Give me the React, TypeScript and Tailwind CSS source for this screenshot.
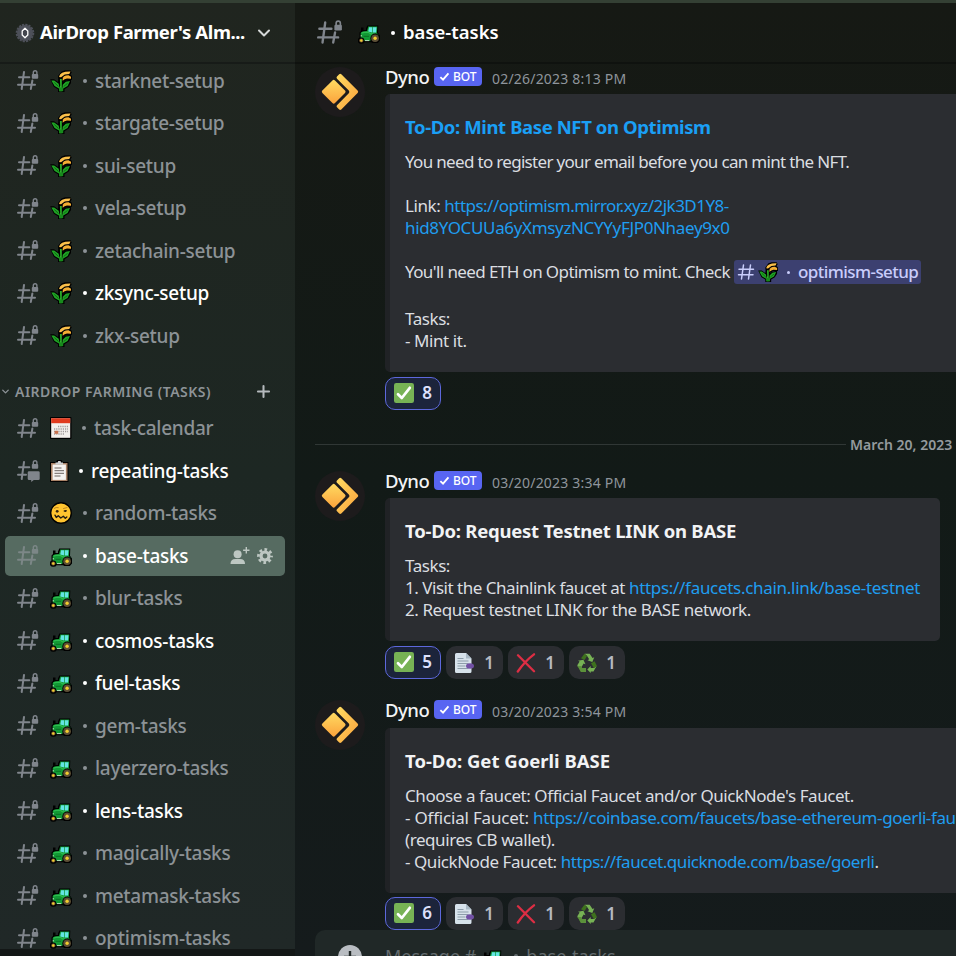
import type { ReactNode } from "react";
import clsx from "clsx";
import { ChevronDown, Plus } from "lucide-react";

type EmojiName = "wheat" | "tractor" | "calendar" | "clipboard" | "woozy";

type Channel = {
  name: string;
  emoji: EmojiName;
  unread?: boolean;
  active?: boolean;
  forum?: boolean;
};

const SETUP: Channel[] = [
  { name: "starknet-setup", emoji: "wheat" },
  { name: "stargate-setup", emoji: "wheat" },
  { name: "sui-setup", emoji: "wheat" },
  { name: "vela-setup", emoji: "wheat" },
  { name: "zetachain-setup", emoji: "wheat" },
  { name: "zksync-setup", emoji: "wheat", unread: true },
  { name: "zkx-setup", emoji: "wheat" },
];

const TASKS: Channel[] = [
  { name: "task-calendar", emoji: "calendar" },
  { name: "repeating-tasks", emoji: "clipboard", unread: true, forum: true },
  { name: "random-tasks", emoji: "woozy" },
  { name: "base-tasks", emoji: "tractor", active: true },
  { name: "blur-tasks", emoji: "tractor" },
  { name: "cosmos-tasks", emoji: "tractor", unread: true },
  { name: "fuel-tasks", emoji: "tractor", unread: true },
  { name: "gem-tasks", emoji: "tractor" },
  { name: "layerzero-tasks", emoji: "tractor" },
  { name: "lens-tasks", emoji: "tractor", unread: true },
  { name: "magically-tasks", emoji: "tractor" },
  { name: "metamask-tasks", emoji: "tractor" },
  { name: "optimism-tasks", emoji: "tractor" },
];

/* ── Icons ── */

function HashLock({ className, forum }: { className?: string; forum?: boolean }) {
  return (
    <svg viewBox="0 0 23 23" className={clsx("shrink-0", className)} fill="none" stroke="currentColor" strokeWidth="2" strokeLinecap="round">
      <path d={forum ? "M7 3 4.7 20M2 8.3h10.3M1 15.7h8" : "M7 3 4.7 20M2 8.3h10.3M1 15.7h17M15.4 11.5 13.8 20"} />
      <rect x="14.8" y="4.9" width="6.4" height="4.8" rx="1" fill="currentColor" stroke="none" />
      <path d="M16.3 5.5V3.6a1.8 1.8 0 0 1 3.6 0v1.9" strokeWidth="1.4" />
      {forum && <path d="M12 12.2h9.4a1.3 1.3 0 0 1 1.3 1.3v6.2a1.3 1.3 0 0 1-1.3 1.3h-4.6l-2.6 2v-2H12a1.3 1.3 0 0 1-1.3-1.3v-6.2a1.3 1.3 0 0 1 1.3-1.3Z" fill="currentColor" stroke="none" />}
    </svg>
  );
}

function Wheat({ className }: { className?: string }) {
  return (
    <svg viewBox="0 0 22 22" className={className} strokeLinejoin="round">
      {/* ears */}
      <path d="M8.5 11.500 8 6 11.500 1.500 15 .3H20.500L21.700 2.500 20.300 4.500 22 6V9.800L17 10 13 12Z" fill="#000" />
      <path d="M9 6.900Q10 1.300 20.500 1.500L19.300 3.900 14.800 4.500 11 7.200Z" fill="#fbc04a" />
      <path d="M12 9.600Q13 5.200 18.500 5.300L21 6.700V8.700L17 8.400Q14.500 8.700 12.400 11Z" fill="#f4ae33" />
      {/* leaves */}
      <path d="M.2 9.300H4L8 12 9.200 8H12.600V12.300L15.500 10.600 21 9.600V13L18.500 16.700 14.500 19.200V22H8V19.200L3.800 16.700Z" fill="#000" />
      <path d="M1.300 10.400H4.200L8.700 13.800 9.800 19 4.600 16ZM20 10.900 15.800 11.700 12.700 14.800 12.400 19 17.600 16Z" fill="#1fa324" />
      <path d="M9.900 9h1.900v12.200H9.300V18.500L10.200 15.500Z" fill="#2cb02a" />
      <path d="M9.200 17.500h4V21.200H9.200Z" fill="#178a1c" />
      <path d="M4.300 12.500 8.500 16.500M17.600 13.300 13.700 16.500" stroke="#07520c" strokeWidth=".7" />
    </svg>
  );
}

function Tractor({ className }: { className?: string }) {
  return (
    <svg viewBox="0 0 22 22" className={className}>
      <path d="M8 6.500 9.300 3.400H20.300L20 10.800 22 13.500V18.500L19.800 21H14.500L13 20.300H6.500L5.500 21.600H1.500L0 20V17L1.500 15.500V10.500L3 9V5.500H5.500V8H8Z" fill="#000" />
      <path d="M2.700 11 4.500 9.400 9 9 10.200 4.400H19.300L18.900 11 21 13.500 14 14.500 12.200 18.900H6.500L2.700 15.800Z" fill="#129a35" />
      <path d="M11.100 5.300H14.100V10.400L10.200 9.500ZM14.800 5.300H18.500L18.100 10.600H14.800Z" fill="#63e5e3" />
      <path d="M3.500 11.200 6 10.300H10.500L12.500 11.800H17" fill="none" stroke="#2dbd50" strokeWidth="1.300" />
      <path d="M5.500 14.300H11" stroke="#08661f" strokeWidth=".8" />
      <path d="M2.700 13.800H4M7 18.600H11.200" stroke="#cfe8d0" strokeWidth=".9" />
      <circle cx="3.300" cy="18.500" r="3" fill="#000" />
      <circle cx="3.300" cy="18.500" r="2.100" fill="#70552f" />
      <circle cx="3.300" cy="18.500" r="1.200" fill="#f2cd2f" />
      <circle cx="17.100" cy="16.200" r="4.700" fill="#000" />
      <circle cx="17.100" cy="16.200" r="3.800" fill="#5c4f35" />
      <circle cx="17.100" cy="16.200" r="1.700" fill="#f2cd2f" />
    </svg>
  );
}

function Calendar({ className }: { className?: string }) {
  return (
    <svg viewBox="0 0 22 22" className={className}>
      <rect width="21.500" height="22" rx="1" fill="#000" />
      <rect x="1.200" y="1.200" width="19" height="19.600" fill="#f3efec" />
      <rect x="1.200" y="1.200" width="19" height="5" fill="#e03a1e" />
      <path d="M8 9.500h10M4 12h14M4 14.500h14M4 17h10" stroke="#a09a9a" strokeWidth="1.300" strokeDasharray="1.200 1" />
      <path d="M4.600 13.800h3.600v3h-3.600z" fill="#c86f4c" />
    </svg>
  );
}

function Clipboard({ className }: { className?: string }) {
  return (
    <svg viewBox="0 0 22 22" className={className}>
      <path d="M0 2H6L7 0H11.500L12.500 2H18.500V22H0Z" fill="#000" />
      <rect x="1" y="3" width="16.500" height="18" fill="#a98267" />
      <rect x="2.600" y="4.500" width="13.300" height="15.400" fill="#f5f2f0" />
      <path d="M5.500 4.600V2.600H7.700L8.200 1H10.500L11 2.600H13V4.600Z" fill="#cfd1d4" />
      <path d="M4.500 8h7M4.500 10.700h9.500M4.500 13.300h9.500M4.500 16h6" stroke="#6b625f" strokeWidth="1" />
    </svg>
  );
}

function Woozy({ className }: { className?: string }) {
  return (
    <svg viewBox="0 0 22 22" className={className} fill="none" strokeLinecap="round" strokeLinejoin="round">
      <circle cx="11" cy="11" r="10.300" fill="#ffc42f" stroke="#000" strokeWidth="1.400" />
      <path d="M5 13.200 6.300 15.400 8.300 13.800 10.800 16 13.300 14.200 15.300 16.300 16.800 15" stroke="#221b12" strokeWidth="1.400" />
      <path d="M4.300 6.300Q6 4.900 8.300 5.600M13.500 6.500 17 5.600" stroke="#b57d20" strokeWidth=".9" />
      <circle cx="7.200" cy="9.300" r="1.400" fill="#35250f" />
      <path d="M13.400 9Q14.300 7.400 17 8.200L16.500 9.400Q15 10.800 13.400 9Z" fill="#35250f" />
    </svg>
  );
}

function Emoji({ name, className }: { name: EmojiName; className?: string }) {
  switch (name) {
    case "wheat":
      return <Wheat className={className} />;
    case "tractor":
      return <Tractor className={className} />;
    case "calendar":
      return <Calendar className={className} />;
    case "clipboard":
      return <Clipboard className={className} />;
    default:
      return <Woozy className={className} />;
  }
}

function DynoAvatar() {
  return (
    <svg viewBox="0 0 50 50" className="h-[50px] w-[50px] shrink-0">
      <defs>
        <linearGradient id="dyno" x1="0" y1="0" x2="1" y2="1">
          <stop offset="0" stopColor="#ffdc62" />
          <stop offset="1" stopColor="#fba13b" />
        </linearGradient>
      </defs>
      <circle cx="25" cy="25" r="25" fill="#1d1b1c" />
      <rect x="9.800" y="15.900" width="17.800" height="17.800" rx="1.800" transform="rotate(45 18.700 24.800)" fill="url(#dyno)" />
      <path d="M22 9.600 24.200 7.300Q25.200 6.400 26.300 7.300L42.600 23.500Q43.800 24.800 42.600 26.100L26.300 42.500Q25.200 43.400 24.200 42.500L22 40.200Q21 39.200 22 38.200L33.800 26.300Q35 24.900 33.800 23.500L22 11.700Q21 10.600 22 9.600Z" fill="url(#dyno)" />
    </svg>
  );
}

function ServerBadge() {
  return (
    <svg viewBox="0 0 20 20" className="h-5 w-5 shrink-0">
      <circle cx="10" cy="10" r="8" fill="#4d5059" />
      <circle cx="10" cy="10" r="8.300" fill="none" stroke="#4d5059" strokeWidth="2" strokeDasharray="2.200 1.060" />
      <path d="M10 5.300 12.800 8v4L10 14.700 7.200 12V8Z" fill="#43464e" stroke="#fff" strokeWidth="1.300" strokeLinejoin="round" />
    </svg>
  );
}

function AddMember() {
  return (
    <svg viewBox="0 0 20 18" className="h-[18px] w-5" fill="#bdc7c2">
      <circle cx="7.600" cy="7.300" r="4" />
      <path d="M.5 17Q.5 12 5.500 12H10Q15 12 15 17Z" />
      <path d="M16.300 0v6.400M13.100 3.200h6.400" stroke="#bdc7c2" strokeWidth="1.400" />
    </svg>
  );
}

function Gear() {
  return (
    <svg viewBox="0 0 16 16" className="h-4 w-4">
      <circle cx="8" cy="8" r="4" fill="none" stroke="#bdc7c2" strokeWidth="3.200" />
      <circle cx="8" cy="8" r="6.500" fill="none" stroke="#bdc7c2" strokeWidth="2.800" strokeDasharray="2.700 2.405" strokeDashoffset="1.350" />
    </svg>
  );
}

/* ── Sidebar ── */

function ChannelRow({ name, emoji, unread, active, forum }: Channel) {
  return (
    <div
      className={clsx(
        "mb-[2.5px] ml-[5px] flex h-10 w-[280px] items-center rounded-[5px] pl-3",
        active && "bg-[#566b61]",
        unread || active ? "text-white" : "text-[#8c9296]",
      )}
    >
      <HashLock forum={forum} className={clsx("h-[23px] w-[23px]", active ? "text-[#7c8787]" : "text-[#80858c]")} />
      <Emoji name={emoji} className="ml-[10px] h-[22px] w-[22px] shrink-0" />
      <span className={clsx("h-1 w-1 shrink-0 rounded-full bg-current", emoji === "clipboard" ? "ml-[7px]" : emoji === "calendar" ? "ml-[10px]" : "ml-[11px]")} />
      <span className="ml-2 text-[19px] leading-10 font-medium tracking-[-0.280px] whitespace-nowrap">{name}</span>
      {active && (
        <span className="mr-3 ml-auto flex items-center gap-[7px]">
          <AddMember />
          <Gear />
        </span>
      )}
    </div>
  );
}

function Sidebar() {
  return (
    <aside className="flex w-[295px] shrink-0 flex-col">
      <div className="flex h-[946px] flex-col overflow-hidden bg-linear-to-b from-[#20251f] via-[#1d2723] to-[#202827]">
        <header className="flex h-[61px] shrink-0 items-center border-b-2 border-[#171b18] pl-[15px]">
          <ServerBadge />
          <h1 className="ml-[5px] w-[208px] text-[18.500px] leading-none font-bold tracking-[-0.400px] whitespace-nowrap text-white">AirDrop Farmer&apos;s Alm...</h1>
          <ChevronDown className="ml-[6px] h-5 w-5 text-[#d5d8d8]" strokeWidth={2.4} />
        </header>
        <div className="-mt-[3.5px] shrink-0">
          {SETUP.map((c) => (
            <ChannelRow key={c.name} {...c} />
          ))}
        </div>
        <div className="mt-[4px] flex h-[46px] shrink-0 items-center pt-[13px] pr-[22px] text-[#8d9397]">
          <ChevronDown className="h-[11px] w-[11px]" strokeWidth={3} />
          <h2 className="ml-1 text-[14px] font-semibold tracking-[0.490px] whitespace-nowrap">AIRDROP FARMING (TASKS)</h2>
          <Plus className="ml-auto h-[19px] w-[19px] text-[#b5babd]" strokeWidth={2.6} />
        </div>
        <div className="shrink-0">
          {TASKS.map((c) => (
            <ChannelRow key={c.name} {...c} />
          ))}
        </div>
      </div>
      <div className="grow bg-[#131716]" />
    </aside>
  );
}

/* ── Messages ── */

function Link({ className, children }: { className?: string; children: ReactNode }) {
  return <span className={clsx("text-[#1f9df0]", className)}>{children}</span>;
}

type ReactionKind = "check" | "page" | "cross" | "recycle";

function ReactionIcon({ kind }: { kind: ReactionKind }) {
  if (kind === "check")
    return (
      <svg viewBox="0 0 20 20" className="h-5 w-5">
        <rect width="20" height="20" rx="2.200" fill="#77b255" />
        <path d="M4 11.300 7.800 15 15.800 4.800" fill="none" stroke="#fff" strokeWidth="2.700" strokeLinecap="round" strokeLinejoin="round" />
      </svg>
    );
  if (kind === "page")
    return (
      <svg viewBox="0 0 20 20" className="h-5 w-5">
        <path d="M2.500 0H12L17.500 5.500V18.500A1.500 1.500 0 0 1 16 20H2.500A1.500 1.500 0 0 1 1 18.500V1.500A1.500 1.500 0 0 1 2.500 0Z" fill="#d7e2eb" />
        <path d="M12 0 17.500 5.500H12Z" fill="#a9b9c6" />
        <path d="M3.500 5.500h6M3.500 8h11M3.500 10.500h11M3.500 13h8M3.500 15.500h11" stroke="#8d9daa" strokeWidth="1.100" />
        <ellipse cx="16" cy="13" rx="4" ry="2.700" fill="#7251a5" />
      </svg>
    );
  if (kind === "cross")
    return (
      <svg viewBox="0 0 20 20" className="h-5 w-5">
        <path d="M2 2.300 18 18.300M18 1.300Q9 8 1.800 18.500" fill="none" stroke="#dd2e44" strokeWidth="2.300" strokeLinecap="round" />
      </svg>
    );
  return (
    <svg viewBox="0 0 20 20" className="h-5 w-5">
      <path d="M7.500.8h5.200L15.500 5 17.300 4.300 15.300 9 10.500 7.200 12.200 6.300 10 2.700Z" fill="#77b255" />
      <path d="M7.500.8 10 2.900 7.600 7 4 5.200Z" fill="#3e721d" />
      <path d="M1 7.700 6.400 6.700 8.500 11.300 6.600 10.500 4.300 14.500 1 14 .3 12.300 2.600 8.500Z" fill="#77b255" />
      <path d="M.5 13h3.800L5.200 15H9V19H3.800Z" fill="#5c913b" />
      <path d="M19.700 12.800 16.500 18.600H13.700V20L10.300 16.500 13.700 13V15H16.500Z" fill="#77b255" />
      <path d="M14 10.200 17.600 8.200 19.800 12.800 17 15.200Z" fill="#3e721d" />
    </svg>
  );
}

function Reactions({ count }: { count: number }) {
  return (
    <div className="flex h-[33px] gap-[5px]">
      <div className="flex w-14 items-center justify-between rounded-[10px] border border-[#5d68dc] bg-[#1c243b] pr-2 pb-px pl-2 text-[17px] font-semibold text-[#dee0fc]">
        <ReactionIcon kind="check" />
        <span>{count}</span>
      </div>
      {count !== 8 &&
        (["page", "cross", "recycle"] as const).map((kind) => (
          <div key={kind} className={clsx("flex items-center justify-between rounded-[10px] bg-[#2b2d31] pr-[9px] pl-2 text-[17px] font-semibold text-[#b5bac1]", kind === "page" ? "w-[57px]" : "w-14")}>
            <ReactionIcon kind={kind} />
            <span>1</span>
          </div>
        ))}
    </div>
  );
}

type MessageProps = {
  time: string;
  title: string;
  titleClass: string;
  embedClass: string;
  count: number;
  children: ReactNode;
};

function Message({ time, title, titleClass, embedClass, count, children }: MessageProps) {
  return (
    <article className="flex pl-5">
      <DynoAvatar />
      <div className="ml-5 flex flex-col">
        <div className="flex h-[28px] items-center pb-[9px] whitespace-nowrap">
          <span className="w-[44px] text-[18.500px] leading-5 font-medium tracking-[-0.500px] text-[#f2f3f5]">Dyno</span>
          <span className="ml-[5px] flex h-[19px] w-12 items-center rounded-[4px] bg-[#5865f2] pl-[5px] text-[12px] leading-none font-medium tracking-[-0.100px] text-white">
            <svg viewBox="0 0 12 12" className="mr-[3px] h-[11px] w-[11px]" fill="none" stroke="currentColor" strokeWidth="2">
              <path d="M1.500 6.700 4.400 9.500 10.300 2.500" />
            </svg>
            BOT
          </span>
          <span className="mt-1 ml-[10px] text-[14px] tracking-[0.200px] text-[#8f959c]">{time}</span>
        </div>
        <div className={clsx("rounded-[5px] border-l-[5px] border-[#202225] bg-[#2b2d31] pt-[22px] pl-[15px] whitespace-nowrap text-[#dbdee1]", embedClass)}>
          <h3 className={clsx("text-[18.500px] leading-[22px] font-bold", titleClass)}>{title}</h3>
          <div className="mt-[13px] text-[17px] leading-[22px] tracking-[-0.430px]">{children}</div>
        </div>
        <div className={count === 6 ? "mt-[4px]" : "mt-[5px]"}>
          <Reactions count={count} />
        </div>
      </div>
    </article>
  );
}

function ChannelMention() {
  return (
    <span className="ml-[4px] inline-flex h-6 w-[187px] shrink-0 items-center rounded-[3px] bg-[#3c4070] pl-[3px] font-medium text-[#c9cdfb]">
      <svg viewBox="0 0 18 18" className="h-[18px] w-[18px]" fill="none" stroke="currentColor" strokeWidth="1.500" strokeLinecap="round">
        <path d="M6.500 2 4.500 16M13.500 2l-2 14M2 6.300h14.500M1.500 11.700H16" />
      </svg>
      <Wheat className="ml-[3px] h-5 w-5" />
      <span className="ml-[9px] h-[3px] w-[3px] rounded-full bg-current" />
      <span className="ml-[8px] tracking-[-0.560px]">optimism-setup</span>
    </span>
  );
}

function Chat() {
  return (
    <main className="flex h-[953px] w-[661px] flex-col overflow-hidden bg-linear-to-b from-[#161914] via-[#121a17] to-[#151b1c]">
      <header className="flex h-[61px] shrink-0 items-center border-b-2 border-[#0f120f] pl-[22px] text-white">
        <HashLock className="h-[27px] w-[27px] text-[#80858c]" />
        <Tractor className="ml-[14px] h-[22px] w-[22px]" />
        <span className="ml-[11px] h-1 w-1 rounded-full bg-current" />
        <span className="ml-[8px] text-[18.500px] leading-none font-semibold">base-tasks</span>
      </header>

      <div className="mt-[3px] shrink-0">
        <Message
          time="02/26/2023 8:13 PM"
          title="To-Do: Mint Base NFT on Optimism"
          titleClass="text-[#1a9ff5] tracking-[-0.390px]"
          embedClass="h-[278px] w-[650px] -mt-px"
          count={8}
        >
          <p className="tracking-[-0.680px]">You need to register your email before you can mint the NFT.</p>
          <br />
          <p>
            Link: <Link className="tracking-[-0.520px]">https://optimism.mirror.xyz/2jk3D1Y8-</Link>
          </p>
          <p>
            <Link className="tracking-[-0.340px]">hid8YOCUUa6yXmsyzNCYYyFJP0Nhaey9x0</Link>
          </p>
          <br />
          <div className="mb-[3px] flex h-[22px] items-center">
            <span className="tracking-[-0.600px]">You&apos;ll need ETH on Optimism to mint. Check</span>
            <ChannelMention />
          </div>
          <br />
          <p>Tasks:</p>
          <p>- Mint it.</p>
        </Message>
      </div>

      <div className="mt-[24px] flex h-5 shrink-0 items-center pl-5">
        <div className="mt-px h-px w-[531px] bg-[#303735]" />
        <span className="ml-1 text-[14px] font-semibold whitespace-nowrap text-[#949a9e]">March 20, 2023</span>
      </div>

      <div className="mt-[17px] shrink-0">
        <Message
          time="03/20/2023 3:34 PM"
          title="To-Do: Request Testnet LINK on BASE"
          titleClass="text-[#f2f3f5] tracking-[-0.240px]"
          embedClass="h-[143px] w-[555px] -mt-px"
          count={5}
        >
          <p>Tasks:</p>
          <p>
            <span className="tracking-[-0.480px]">1. Visit the Chainlink faucet at </span>
            <Link className="tracking-[-0.300px]">https://faucets.chain.link/base-testnet</Link>
          </p>
          <p>2. Request testnet LINK for the BASE network.</p>
        </Message>
      </div>

      <div className="mt-[21px] shrink-0">
        <Message
          time="03/20/2023 3:54 PM"
          title="To-Do: Get Goerli BASE"
          titleClass="text-[#f2f3f5]"
          embedClass="h-[165px] w-[650px]"
          count={6}
        >
          <p>Choose a faucet: Official Faucet and/or QuickNode&apos;s Faucet.</p>
          <p>
            <span className="tracking-[-0.200px]">- Official Faucet: </span>
            <Link className="tracking-[-0.400px]">https://coinbase.com/faucets/base-ethereum-goerli-fau</Link>
          </p>
          <p>(requires CB wallet).</p>
          <p className="tracking-[-0.450px]">
            - QuickNode Faucet: <Link>https://faucet.quicknode.com/base/goerli</Link>.
          </p>
        </Message>
      </div>

      <div className="ml-5 flex h-[50px] shrink-0 rounded-tl-[10px] bg-[#202827] pt-[15px] pl-[23px]">
        <svg viewBox="0 0 24 24" className="h-6 w-6 shrink-0">
          <circle cx="12" cy="12" r="12" fill="#b9bdc2" />
          <path d="M12 6v12M6 12h12" stroke="#202827" strokeWidth="2.400" />
        </svg>
        <span className="ml-[23px] text-[18px] leading-[22px] text-[#636b6e]">Message #</span>
        <Tractor className="mt-[2px] ml-[5px] h-[22px] w-[22px] shrink-0" />
        <span className="mt-[9px] ml-[11px] h-1 w-1 rounded-full bg-[#636b6e]" />
        <span className="ml-[8px] text-[18px] leading-[22px] text-[#636b6e]">base-tasks</span>
      </div>
    </main>
  );
}

export default function App() {
  return (
    <div className="h-[956px] w-[956px] overflow-hidden bg-[#060808] font-['Noto_Sans',sans-serif]">
      <div className="h-[3px] bg-[#344034]" />
      <div className="flex h-[953px]">
        <Sidebar />
        <Chat />
      </div>
    </div>
  );
}
